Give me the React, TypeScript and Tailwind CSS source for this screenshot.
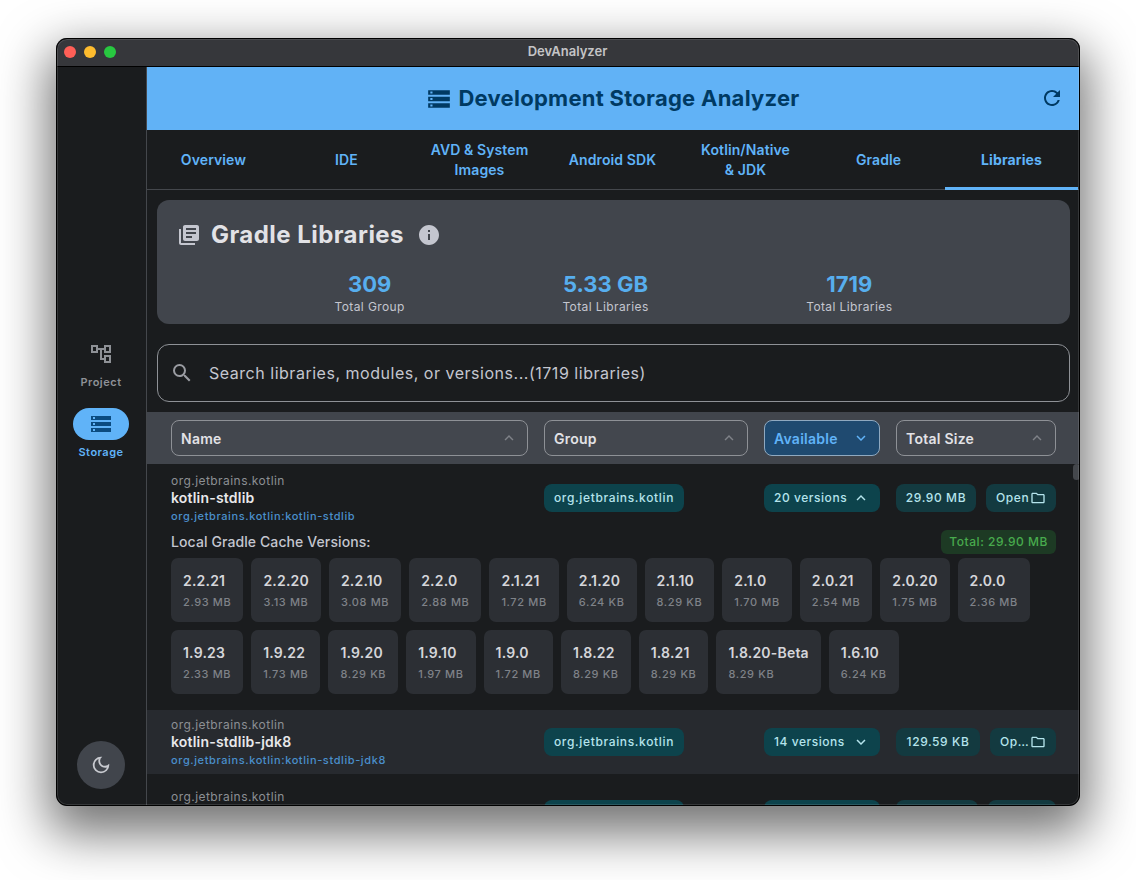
import React from "react";
import {
  MdOutlineAccountTree,
  MdStorage,
  MdLibraryBooks,
  MdInfo,
  MdRefresh,
  MdOutlineDarkMode,
  MdOutlineFolder,
  MdKeyboardArrowUp,
  MdKeyboardArrowDown,
  MdSearch,
} from "react-icons/md";

const tabs = ["Overview", "IDE", "AVD & System\nImages", "Android SDK", "Kotlin/Native\n& JDK", "Gradle", "Libraries"];

const v1: [string, string][] = [
  ["2.2.21", "2.93 MB"], ["2.2.20", "3.13 MB"], ["2.2.10", "3.08 MB"], ["2.2.0", "2.88 MB"],
  ["2.1.21", "1.72 MB"], ["2.1.20", "6.24 KB"], ["2.1.10", "8.29 KB"], ["2.1.0", "1.70 MB"],
  ["2.0.21", "2.54 MB"], ["2.0.20", "1.75 MB"], ["2.0.0", "2.36 MB"],
  ["1.9.23", "2.33 MB"], ["1.9.22", "1.73 MB"], ["1.9.20", "8.29 KB"], ["1.9.10", "1.97 MB"],
  ["1.9.0", "1.72 MB"], ["1.8.22", "8.29 KB"], ["1.8.21", "8.29 KB"], ["1.8.20-Beta", "8.29 KB"], ["1.6.10", "6.24 KB"],
];

function Filter({ label, w, active }: { label: string; w: string; active?: boolean }) {
  return (
    <div
      className={`${w} h-9 shrink-0 rounded-lg border flex items-center justify-between pl-[9px] pr-[9px] ${
        active ? "border-[#8fa9c0] bg-[#1f4a70]" : "border-[#8e9196] bg-[#43474e]"
      }`}
    >
      <span className={`text-[14px] font-semibold tracking-[0.25px] ${active ? "text-[#60b3f8]" : "text-[#e2e2e6]"}`}>{label}</span>
      {active ? (
        <MdKeyboardArrowDown className="text-[#60b3f8]" size={18} />
      ) : (
        <MdKeyboardArrowUp className="text-[#7f8288]" size={18} />
      )}
    </div>
  );
}

function Chip({ children, className = "" }: { children: React.ReactNode; className?: string }) {
  return (
    <div className={`h-7 rounded-lg flex items-center text-[12px] font-medium text-[#b5e4ec] ${className}`}>
      {children}
    </div>
  );
}

function Row({
  name, versions, size, open, expanded, alt, sizeW, h,
}: {
  name: string; versions: string; size: string; open: string; expanded?: boolean; alt?: boolean; sizeW: string; h: string;
}) {
  return (
    <div className={`flex items-center ${h} pl-6 pr-6 shrink-0 ${alt ? "bg-[#272a2f]" : ""}`}>
      <div className="w-[373px] shrink-0 flex flex-col pt-[2px]">
        <div className="text-[12px] leading-[16px] text-[#8c8f94] tracking-[0.45px]">org.jetbrains.kotlin</div>
        <div className="text-[14px] leading-[18px] font-semibold text-[#e8e8ea] tracking-[0.2px]">{name}</div>
        <div className="text-[11px] leading-[19px] font-medium text-[#4a8fcc] tracking-[0.6px]">org.jetbrains.kotlin:{name}</div>
      </div>
      <div className="w-[220px] shrink-0">
        <Chip className="w-[140px] justify-center bg-[#0d434c] tracking-[0.65px]">org.jetbrains.kotlin</Chip>
      </div>
      <Chip className="w-[116px] shrink-0 pl-[10px] pr-[10px] justify-between bg-[#0d434c] tracking-[0.55px]">
        <span>{versions}</span>
        {expanded ? <MdKeyboardArrowUp size={18} /> : <MdKeyboardArrowDown size={18} />}
      </Chip>
      <Chip className={`${sizeW} ml-4 shrink-0 justify-center bg-[#133a40] tracking-[0.6px]`}>{size}</Chip>
      <Chip className="flex-1 min-w-0 ml-[10px] pl-[10px] pr-[10px] justify-between bg-[#133a40] tracking-[0.6px]">
        <span>{open}</span>
        <MdOutlineFolder size={16} className="shrink-0" />
      </Chip>
    </div>
  );
}

export default function App() {
  return (
    <div className="w-[1136px] h-[880px] bg-white pl-[56px] pt-[38px] overflow-hidden" style={{ fontFamily: "Inter, 'Noto Sans', sans-serif" }}>
      <div className="relative w-[1024px] h-[768px] rounded-[11px] bg-[#1a1c1e] flex flex-col overflow-hidden shadow-[0_20px_50px_8px_rgba(0,0,0,0.55)]">
        <div className="h-[29px] shrink-0 bg-[#36373b] border-b border-black flex items-center justify-center relative">
          <div className="absolute left-[8px] top-[8px] flex gap-2">
            <span className="w-3 h-3 rounded-full bg-[#ff5f57]" />
            <span className="w-3 h-3 rounded-full bg-[#febc2e]" />
            <span className="w-3 h-3 rounded-full bg-[#28c840]" />
          </div>
          <span className="text-[13px] font-semibold text-[#c4c4c6] -ml-px">DevAnalyzer</span>
        </div>
        <div className="flex flex-1 min-h-0">
          <div className="w-[91px] shrink-0 border-r border-[#44474c] flex flex-col items-center relative">
            <div className="mt-[275px] flex flex-col items-center">
              <MdOutlineAccountTree className="text-[#8e9196]" size={24} />
              <span className="text-[11px] font-semibold text-[#8e9196] tracking-[0.5px] mt-[8px] leading-[16px]">Project</span>
            </div>
            <div className="mt-[18px] flex flex-col items-center">
              <div className="w-14 h-8 rounded-full bg-[#60b3f8] flex items-center justify-center">
                <MdStorage className="text-[#0b4b80]" size={24} />
              </div>
              <span className="text-[11px] font-semibold text-[#60b3f8] tracking-[0.5px] mt-[4px] leading-[16px]">Storage</span>
            </div>
            <div className="absolute bottom-[17px] w-12 h-12 rounded-full bg-[#41454c] flex items-center justify-center">
              <MdOutlineDarkMode className="text-[#c8cad0]" size={22} />
            </div>
          </div>
          <div className="flex-1 min-w-0 flex flex-col overflow-hidden">
            <div className="h-[63px] shrink-0 bg-[#61b2f6] flex items-center justify-center relative">
              <MdStorage className="text-[#003a63] -ml-[1px]" size={26} />
              <span className="ml-[6px] text-[22px] font-bold text-[#003a63] tracking-[0.26px]">Development Storage Analyzer</span>
              <MdRefresh className="absolute right-[16px] top-[19px] text-[#003a63]" size={24} />
            </div>
            <div className="h-[60px] shrink-0 flex border-b border-[#44474c]">
              {tabs.map((t) => {
                const active = t === "Libraries";
                return (
                  <div key={t} className="relative w-[133px] flex items-center justify-center text-center whitespace-pre-line text-[14px] leading-[20px] font-semibold text-[#60b3f8] tracking-[0.1px]">
                    <span className={active ? "font-bold" : ""}>{t}</span>
                    {active && <span className="absolute left-0 right-0 -bottom-px h-[3px] bg-[#60b3f8]" />}
                  </div>
                );
              })}
            </div>
            <div className="px-[10px] pt-[10px] shrink-0">
              <div className="h-[124px] rounded-xl bg-[#41454c] flex flex-col px-5 pt-[19px]">
                <div className="flex items-center">
                  <MdLibraryBooks className="text-[#c4c6cf]" size={24} />
                  <span className="ml-[10px] text-[24px] leading-[32px] font-bold text-[#e2e2e6] tracking-[0.45px]">Gradle Libraries</span>
                  <MdInfo className="ml-[13px] text-[#c4c6cf]" size={24} />
                </div>
                <div className="flex justify-evenly mt-[19px]">
                  {[["309", "Total Group"], ["5.33 GB", "Total Libraries"], ["1719", "Total Libraries"]].map(([a, b], i) => (
                    <div key={i} className="flex flex-col items-center">
                      <span className="text-[22px] leading-[28px] font-bold text-[#57aeee]">{a}</span>
                      <span className="mt-[1px] text-[12px] leading-[16px] text-[#c4c6cf] tracking-[0.4px]">{b}</span>
                    </div>
                  ))}
                </div>
              </div>
              <div className="mt-5 h-[58px] rounded-xl border border-[#8e9196] flex items-center pl-[12px]">
                <MdSearch className="text-[#9a9ca2]" size={24} />
                <span className="ml-[15px] text-[16px] text-[#c4c6cf] tracking-[0.52px]">Search libraries, modules, or versions...(1719 libraries)</span>
              </div>
            </div>
            <div className="mt-[10px] h-[52px] shrink-0 bg-[#41454c] flex items-center pl-6 pr-6 gap-4">
              <Filter label="Name" w="w-[357px]" />
              <Filter label="Group" w="w-[204px]" />
              <Filter label="Available" w="w-[116px]" active />
              <Filter label="Total Size" w="w-[160px]" />
            </div>
            <div className="relative flex-1 min-h-0 overflow-hidden">
              <div className="absolute right-0 top-0 w-[7px] h-4 rounded-full bg-[#44474c]" />
              <Row h="h-[68px]" name="kotlin-stdlib" versions="20 versions" size="29.90 MB" open="Open" expanded sizeW="w-[80px]" />
              <div className="pl-6 pr-6 pb-4 -mt-[2px]">
                <div className="flex items-center justify-between h-6">
                  <span className="text-[14px] font-medium text-[#c4c6cf] tracking-[0.1px] pb-[2px]">Local Gradle Cache Versions:</span>
                  <span className="h-6 px-2 rounded-md bg-[#1d3a24] flex items-center text-[12px] font-medium text-[#48ab4d] tracking-[0.55px]">Total: 29.90 MB</span>
                </div>
                <div className="mt-[4px] flex flex-wrap gap-x-2 gap-y-2">
                  {v1.map(([a, b]) => (
                    <div key={a} className="h-16 px-3 rounded-[7px] bg-[#2c2f34] flex flex-col justify-center">
                      <span className="text-[14px] leading-[20px] font-semibold text-[#d5d6da] tracking-[0.2px]">{a}</span>
                      <span className="mt-[3px] text-[11px] leading-[16px] font-medium text-[#7f8288] tracking-[0.62px]">{b}</span>
                    </div>
                  ))}
                </div>
              </div>
              <Row h="h-16" name="kotlin-stdlib-jdk8" versions="14 versions" size="129.59 KB" open="Op…" alt sizeW="w-[84px]" />
              <Row h="h-[80px]" name="kotlin-stdlib-jdk7" versions="14 versions" size="128.11 KB" open="Op…" sizeW="w-[82px]" />
            </div>
          </div>
        </div>
        <div className="absolute inset-0 rounded-[11px] border border-black pointer-events-none shadow-[inset_0_0_0_1px_rgba(255,255,255,0.12)]" />
      </div>
    </div>
  );
}
